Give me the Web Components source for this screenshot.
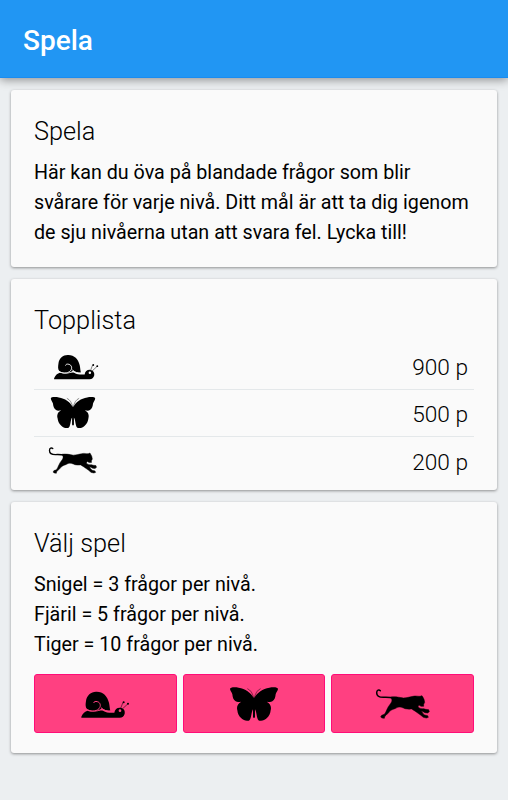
<!DOCTYPE html>
<html lang="sv">
<head>
    <meta charset="UTF-8">
    <meta name="viewport" content="width=device-width, initial-scale=1.0">
    <title>Spela</title>
    <style>
        html, body {
            margin: 0;
            min-height: 100%;
            background: #eceff1;
        }
        body {
            font-family: Roboto, sans-serif;
            color: #000;
        }
    </style>
</head>
<body>
    <template id="quiz-page-template">
        <style>
            :host {
                display: block;
            }
            main {
                display: flex;
                flex-direction: column;
                gap: 12px;
                padding: 12px 11px;
            }
            p {
                margin: 0;
                white-space: nowrap;
            }
            .games {
                display: flex;
                gap: 6px;
                margin-top: 14px;
            }
        </style>
        <app-bar>Spela</app-bar>
        <main>
            <info-card style="height: 177px">
                <span slot="title">Spela</span>
                <p>Här kan du öva på blandade frågor som blir<br>svårare för varje nivå. Ditt mål är att ta dig igenom<br>de sju nivåerna utan att svara fel. Lycka till!</p>
            </info-card>
            <info-card style="height: 211px">
                <span slot="title">Topplista</span>
                <score-row animal="snail">900 p</score-row>
                <score-row animal="butterfly">500 p</score-row>
                <score-row animal="tiger">200 p</score-row>
            </info-card>
            <info-card style="height: 251px">
                <span slot="title">Välj spel</span>
                <p>Snigel = 3 frågor per nivå.<br>Fjäril = 5 frågor per nivå.<br>Tiger = 10 frågor per nivå.</p>
                <div class="games">
                    <game-button animal="snail" label="Snigel"></game-button>
                    <game-button animal="butterfly" label="Fjäril"></game-button>
                    <game-button animal="tiger" label="Tiger"></game-button>
                </div>
            </info-card>
        </main>
    </template>

    <script>
        // Silhouettes share a 168x120 canvas
        const ANIMALS = {
            snail: `
                <path d="M13 101 L13 98 C17 88 24 82 32 80 C39 83 51 83 61 82 C68 80 73 78 78 80 C88 86 99 87 112 86 C113 76 121 70 130 71 C140 72 145 80 143 89 C141 97 136 101 128 101 Z"/>
                <path d="M31 76 C24 69 26 59 27 51 C29 34 42 23 57 23 C78 22 91 36 96 56 C98 65 98 73 100 80 C90 81 81 79 75 73 C65 82 43 83 31 76 Z"/>
                <path d="M28 75 C39 83 56 84 66 74 C73 66 70 55 61 53 C55 51 51 53 50 57 M72 71 C79 79 90 82 102 81" fill="none" stroke="var(--icon-back, #fafafa)" stroke-width="3"/>
                <path d="M131 73 L138 55 M136 75 L153 59" fill="none" stroke="#000" stroke-width="1.6"/>
                <circle cx="140" cy="55" r="3"/><circle cx="153" cy="59" r="3"/>
                <circle cx="129" cy="80" r="4" fill="var(--icon-back, #fafafa)"/>`,
            butterfly: `
                <path d="M84 43 C74 25 58 14 38 11 C24 9 12 10 12 15 C13 21 18 25 19 31 C20 40 22 48 29 52 C35 56 41 53 46 53 C35 58 31 68 34 79 C35 88 38 96 46 103 C52 109 60 112 68 110 C76 107 75 91 79 80 L81 76 L81 99 C82 103 86 103 87 99 L87 76 L89 80 C93 91 92 107 100 110 C108 112 116 109 122 103 C130 96 133 88 134 79 C137 68 133 58 122 53 C127 53 133 56 139 52 C146 48 148 40 149 31 C150 25 155 21 156 15 C156 10 144 9 130 11 C110 14 94 25 84 43 Z"/>
                <path d="M83 42 C80 28 74 18 64 14 M85 42 C88 28 94 18 104 14" fill="none" stroke="#000" stroke-width="1.4"/>`,
            tiger: `
                <path d="M16 20 C12 16 5 18 5 26 C5 37 14 40 25 40 C37 39 46 40 58 43" fill="none" stroke="#000" stroke-width="4.5" stroke-linecap="round"/>
                <path stroke="#000" stroke-width="1.5" stroke-linejoin="round" d="M47 39 C60 37 73 40 85 42 C96 42 105 38 114 37 C121 35 128 37 135 37 L141 35 L144 40 L147 46 L149 55 L146 61 L146 67 L138 67 L132 63 L129 68 C134 74 141 75 146 74 L152 76 L161 77 L163 83 L158 87 L150 86 L139 80 C142 85 144 90 149 93 L158 95 L160 100 L154 102 L145 100 C139 95 134 91 128 87 C121 81 114 78 110 75 C102 76 97 75 90 74 C82 70 75 68 68 70 C62 72 60 75 54 76 C47 79 44 82 40 87 L33 94 L29 98 L28 103 L21 102 L17 99 L20 94 L28 91 C32 87 33 82 36 76 L40 68 L48 57 C52 50 52 47 47 39 Z"/>`
        };

        class AppBar extends HTMLElement {
            constructor() {
                super();
                this.attachShadow({ mode: 'open' }).innerHTML = `
                    <style>
                        :host {
                            display: flex;
                            align-items: center;
                            box-sizing: border-box;
                            height: 78px;
                            padding: 3px 23px 0;
                            background: #2196f3;
                            border-bottom: 1px solid #1a8cf0;
                            box-shadow: 0 2px 9px rgba(0, 0, 0, .4);
                            color: #fff;
                            font-size: 28px;
                            font-weight: 500;
                        }
                    </style>
                    <slot></slot>
                `;
            }
        }

        class InfoCard extends HTMLElement {
            constructor() {
                super();
                this.attachShadow({ mode: 'open' }).innerHTML = `
                    <style>
                        :host {
                            display: block;
                            box-sizing: border-box;
                            padding: 25px 23px 0;
                            border-radius: 3px;
                            background: #fafafa;
                            box-shadow: 0 1px 3px rgba(0, 0, 0, .4);
                            font-size: 19.7px;
                            line-height: 30px;
                        }
                        h2 {
                            margin: 0 0 9px;
                            font-size: 25.3px;
                            font-weight: 300;
                            line-height: 34px;
                        }
                    </style>
                    <h2><slot name="title"></slot></h2>
                    <slot></slot>
                `;
            }
        }

        class AnimalIcon extends HTMLElement {
            connectedCallback() {
                const root = this.shadowRoot || this.attachShadow({ mode: 'open' });
                root.innerHTML = `
                    <style>
                        :host {
                            display: block;
                            width: 56px;
                            height: 40px;
                        }
                        svg {
                            display: block;
                            width: 100%;
                            height: 100%;
                        }
                    </style>
                    <svg viewBox="0 0 168 120" aria-hidden="true">${ANIMALS[this.getAttribute('name')]}</svg>
                `;
            }
        }

        class ScoreRow extends HTMLElement {
            connectedCallback() {
                const root = this.shadowRoot || this.attachShadow({ mode: 'open' });
                root.innerHTML = `
                    <style>
                        :host {
                            display: flex;
                            align-items: center;
                            justify-content: space-between;
                            box-sizing: border-box;
                            height: 46.5px;
                            padding: 0 6px 0 13px;
                            border-bottom: 1px solid #e4e8ea;
                            font-size: 22.7px;
                            font-weight: 300;
                        }
                        :host(:last-of-type) {
                            height: 48px;
                            border-bottom: none;
                        }
                        :host(:first-of-type) {
                            margin-top: -3.5px;
                        }
                        animal-icon {
                            width: 52px;
                            height: 37px;
                        }
                        animal-icon[name="snail"] {
                            margin-left: 3px;
                        }
                        animal-icon[name="tiger"] {
                            width: 50px;
                            margin-left: 1px;
                        }
                        .points {
                            padding-top: 4px;
                        }
                    </style>
                    <animal-icon name="${this.getAttribute('animal')}"></animal-icon>
                    <div class="points"><slot></slot></div>
                `;
            }
        }

        class GameButton extends HTMLElement {
            connectedCallback() {
                const root = this.shadowRoot || this.attachShadow({ mode: 'open' });
                root.innerHTML = `
                    <style>
                        :host {
                            display: flex;
                            flex: 1;
                        }
                        button {
                            display: flex;
                            flex: 1;
                            align-items: center;
                            justify-content: center;
                            height: 59px;
                            padding: 0;
                            border: 1px solid #ff0c78;
                            border-radius: 3px;
                            background: #ff4081;
                            --icon-back: #ff4081;
                            cursor: pointer;
                        }
                    </style>
                    <button aria-label="${this.getAttribute('label')}">
                        <animal-icon name="${this.getAttribute('animal')}"></animal-icon>
                    </button>
                `;
            }
        }

        class QuizPage extends HTMLElement {
            constructor() {
                super();
                const template = document.getElementById('quiz-page-template');
                this.attachShadow({ mode: 'open' }).appendChild(document.importNode(template.content, true));
            }
        }

        customElements.define('app-bar', AppBar);
        customElements.define('info-card', InfoCard);
        customElements.define('animal-icon', AnimalIcon);
        customElements.define('score-row', ScoreRow);
        customElements.define('game-button', GameButton);
        customElements.define('quiz-page', QuizPage);
    </script>

    <quiz-page></quiz-page>
</body>
</html>
